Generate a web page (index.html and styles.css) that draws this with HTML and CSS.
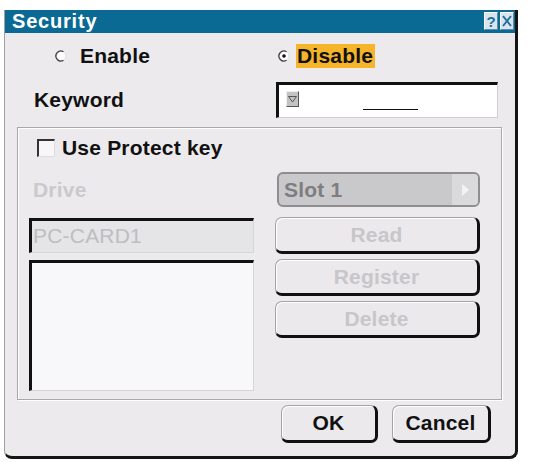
FILE: index.html
```html
<!DOCTYPE html>
<html>
<head>
<meta charset="utf-8">
<title>Security</title>
<link rel="stylesheet" href="styles.css">
</head>
<body>
<div class="dialog">
  <div class="titlebar">
    <span class="title">Security</span>
    <div class="tbtns">
      <span class="tbtn">?</span>
      <span class="tbtn"><svg width="10" height="12" viewBox="0 0 10 12"><path d="M1 1 L9 11 M9 1 L1 11" stroke="#1d70a0" stroke-width="2" fill="none"/></svg></span>
    </div>
  </div>
  <div class="content">
    <div class="radios">
      <div class="radio r-enable">
        <svg class="rad" width="12" height="12" viewBox="0 0 12 12"><circle cx="6" cy="6" r="5" fill="#fff" stroke="#dcdcdc"/><path d="M8.5 1.7 A5 5 0 1 0 8.5 10.3" fill="none" stroke="#444" stroke-width="1.3"/></svg>
        <span>Enable</span>
      </div>
      <div class="radio r-disable">
        <svg class="rad" width="12" height="12" viewBox="0 0 12 12"><circle cx="6" cy="6" r="5" fill="#fff" stroke="#dcdcdc"/><path d="M8.5 1.7 A5 5 0 1 0 8.5 10.3" fill="none" stroke="#444" stroke-width="1.3"/><circle cx="6" cy="6" r="1.8" fill="#111"/></svg>
        <span class="hl">Disable</span>
      </div>
    </div>
    <div class="kwrow">
      <span class="kwlabel">Keyword</span>
      <div class="kwbox">
        <span class="minibtn"><svg width="9" height="7" viewBox="0 0 9 7"><path d="M0.5 0.5 H8.5 L4.5 6 Z" fill="none" stroke="#555" stroke-width="1"/></svg></span>
        <span class="uline"></span>
      </div>
    </div>
    <div class="group">
      <div class="checkrow"><span class="cbox"></span><span>Use Protect key</span></div>
      <div class="cols">
        <div class="lcol">
          <div class="drive">Drive</div>
          <div class="field">PC-CARD1</div>
          <div class="list"></div>
        </div>
        <div class="rcol">
          <div class="select">
            <span class="seltext">Slot 1</span>
            <span class="selarrow"><svg width="7" height="12" viewBox="0 0 7 12"><path d="M0 0 L7 6 L0 12 Z" fill="#f3f2f5"/></svg></span>
          </div>
          <div class="btn dis">Read</div>
          <div class="btn dis">Register</div>
          <div class="btn dis">Delete</div>
        </div>
      </div>
    </div>
    <div class="footer">
      <div class="btn ok">OK</div>
      <div class="btn cancel">Cancel</div>
    </div>
  </div>
</div>
</body>
</html>
```

FILE: styles.css
```css
body {
  margin: 0;
  background: #ffffff;
  font-family: "Liberation Sans", Arial, sans-serif;
}

.dialog {
  margin: 10px 0 0 4px;
  width: 510px;
  height: 446px;
  background: #eceaed;
  border-left: 1px solid #a0a0a0;
  border-right: 3px solid #151515;
  border-bottom: 3px solid #151515;
  border-bottom-left-radius: 8px;
  border-bottom-right-radius: 8px;
  display: flex;
  flex-direction: column;
  font-weight: bold;
  font-size: 21px;
  letter-spacing: 0.2px;
  color: #111;
}

.titlebar {
  height: 23px;
  background: #0a6a93;
  display: flex;
  align-items: center;
  padding: 0 1px 0 7px;
}

.title {
  color: #fff;
  font-size: 20px;
  letter-spacing: 0.8px;
  line-height: 23px;
}

.tbtns {
  margin-left: auto;
  align-self: flex-start;
  margin-top: 2px;
  display: flex;
  gap: 2px;
}

.tbtn {
  width: 14px;
  height: 18px;
  box-sizing: border-box;
  background: #d9e4ec;
  border: 1px solid;
  border-color: #f4f8fb #5d8aa6 #5d8aa6 #f4f8fb;
  color: #1d70a0;
  font-size: 15px;
  letter-spacing: 0;
  display: flex;
  align-items: center;
  justify-content: center;
}

.content {
  flex: 1;
  display: flex;
  flex-direction: column;
}

.radios {
  display: flex;
  margin-top: 11px;
  padding-left: 50px;
  height: 24px;
  align-items: center;
}

.radio {
  display: flex;
  align-items: center;
}

.r-enable {
  width: 223px;
  gap: 13px;
}

.r-disable {
  gap: 6px;
}

.hl {
  background: #f6b42a;
  padding: 0 2px 0 1px;
  line-height: 24px;
}

.kwrow {
  display: flex;
  align-items: center;
  margin-top: 14px;
  height: 36px;
}

.kwlabel {
  width: 271px;
  padding-left: 29px;
  box-sizing: border-box;
}

.kwbox {
  width: 222px;
  height: 36px;
  box-sizing: border-box;
  border-top: 3px solid #111;
  border-left: 3px solid #111;
  border-right: 1px solid #d0d0d0;
  border-bottom: 1px solid #d0d0d0;
  background: #fff;
  display: flex;
  align-items: flex-start;
}

.minibtn {
  margin: 6px 0 0 7px;
  width: 13px;
  height: 16px;
  box-sizing: border-box;
  background: #c3c2c5;
  border: 1px solid;
  border-color: #eeeeee #555 #555 #eeeeee;
  display: flex;
  align-items: center;
  justify-content: center;
}

.uline {
  margin: 24px 0 0 64px;
  width: 55px;
  height: 1px;
  background: #111;
}

.group {
  margin: 9px 0 0 12px;
  width: 485px;
  height: 273px;
  box-sizing: border-box;
  border: 1px solid #a9a9a9;
  box-shadow: inset 1px 1px 0 #fff, 1px 1px 0 #fff;
}

.checkrow {
  display: flex;
  align-items: center;
  height: 24px;
  margin-top: 8px;
  padding-left: 19px;
  gap: 7px;
}

.cbox {
  width: 18px;
  height: 18px;
  box-sizing: border-box;
  background: #f7f6f9;
  border-top: 2px solid #333;
  border-left: 2px solid #333;
  border-right: 1px solid #dddddd;
  border-bottom: 1px solid #dddddd;
}

.cols {
  display: flex;
  margin-top: 12px;
  padding-left: 11px;
  gap: 21px;
}

.lcol {
  width: 225px;
  display: flex;
  flex-direction: column;
}

.drive {
  height: 35px;
  line-height: 35px;
  padding-left: 4px;
  color: #cac9cc;
}

.field {
  margin-top: 11px;
  height: 35px;
  box-sizing: border-box;
  border-top: 3px solid #111;
  border-left: 3px solid #111;
  border-right: 1px solid #d6d6d6;
  border-bottom: 1px solid #d6d6d6;
  background: #e5e4e7;
  color: #bebdc0;
  font-weight: normal;
  padding-left: 1px;
  line-height: 30px;
}

.list {
  margin-top: 7px;
  height: 131px;
  box-sizing: border-box;
  border-top: 3px solid #111;
  border-left: 3px solid #111;
  border-right: 1px solid #d6d6d6;
  border-bottom: 1px solid #d6d6d6;
  background: #f8f7fa;
}

.rcol {
  width: 205px;
  display: flex;
  flex-direction: column;
  gap: 5px;
}

.select {
  margin: 0 0 5px 2px;
  height: 35px;
  box-sizing: border-box;
  border: 2px solid #8e8d90;
  border-radius: 6px;
  background: #c9c8cb;
  display: flex;
  overflow: hidden;
}

.seltext {
  flex: 1;
  color: #7e7e80;
  padding-left: 5px;
  line-height: 31px;
}

.selarrow {
  width: 26px;
  background: #dad9dc;
  display: flex;
  align-items: center;
  justify-content: center;
}

.btn {
  height: 37px;
  box-sizing: border-box;
  border: 1px solid #a4a4a6;
  border-right: 3px solid #111;
  border-bottom: 3px solid #111;
  border-radius: 7px;
  background: #ebe9ec;
  box-shadow: inset 1px 1px 0 #ffffff;
  text-align: center;
  line-height: 33px;
}

.dis {
  color: #c7c6c9;
}

.footer {
  display: flex;
  justify-content: flex-end;
  gap: 14px;
  margin-top: 5px;
  padding-right: 24px;
}

.ok {
  width: 97px;
  height: 38px;
  line-height: 34px;
}

.cancel {
  width: 99px;
  height: 38px;
  line-height: 34px;
}
```
